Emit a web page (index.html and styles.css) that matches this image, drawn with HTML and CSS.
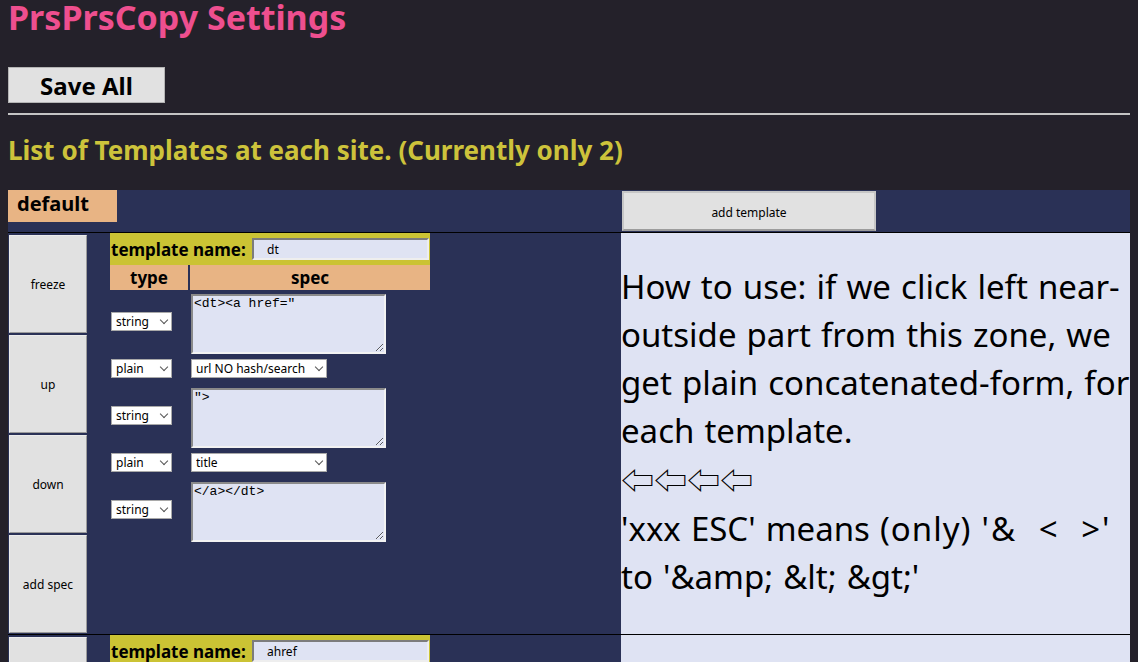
FILE: index.html
```html
<!DOCTYPE html>
<html lang="en">
<head>
<meta charset="utf-8">
<title>PrsPrsCopy Settings</title>
<link rel="stylesheet" href="styles.css">
</head>
<body>
<h1 class="title">PrsPrsCopy Settings</h1>
<button class="save-btn">Save All</button>
<hr class="rule">
<h2 class="subtitle">List of Templates at each site. (Currently only 2)</h2>

<div class="site">
  <div class="site-head">
    <div class="site-left"><div class="site-name">default</div></div>
    <div class="site-right"><button class="add-tpl">add template</button></div>
  </div>

  <div class="tpl-row">
    <div class="tpl-main">
      <div class="tpl-buttons">
        <button class="side-btn">freeze</button>
        <button class="side-btn">up</button>
        <button class="side-btn">down</button>
        <button class="side-btn">add spec</button>
      </div>
      <div class="tpl">
        <div class="tpl-name"><span class="tpl-label">template name:</span><input class="tpl-input" value="dt"></div>
        <div class="spec-head"><div class="spec-h type-h">type</div><div class="spec-h spec-hh">spec</div></div>
        <div class="spec-row text-row">
          <span class="sel sel-type"><select><option>string</option></select></span>
          <textarea class="spec-text">&lt;dt&gt;&lt;a href="</textarea>
        </div>
        <div class="spec-row plain-row">
          <span class="sel sel-type"><select><option>plain</option></select></span>
          <span class="sel sel-val"><select><option>url NO hash/search</option></select></span>
        </div>
        <div class="spec-row text-row">
          <span class="sel sel-type"><select><option>string</option></select></span>
          <textarea class="spec-text">"&gt;</textarea>
        </div>
        <div class="spec-row plain-row">
          <span class="sel sel-type"><select><option>plain</option></select></span>
          <span class="sel sel-val"><select><option>title</option></select></span>
        </div>
        <div class="spec-row text-row">
          <span class="sel sel-type"><select><option>string</option></select></span>
          <textarea class="spec-text">&lt;/a&gt;&lt;/dt&gt;</textarea>
        </div>
      </div>
    </div>
    <div class="help">How to use: if we click left near-outside part from this zone, we get plain concatenated-form, for each template.<br><span class="arrows">⇦⇦⇦⇦</span><br>'xxx ESC' means <span class="only">(only)</span> <span class="syms">'&amp; &lt; &gt;'</span> to '&amp;amp; &amp;lt; &amp;gt;'</div>
  </div>

  <div class="tpl-row">
    <div class="tpl-main">
      <div class="tpl-buttons">
        <button class="side-btn">freeze</button>
        <button class="side-btn">up</button>
        <button class="side-btn">down</button>
        <button class="side-btn">add spec</button>
      </div>
      <div class="tpl">
        <div class="tpl-name"><span class="tpl-label">template name:</span><input class="tpl-input" value="ahref"></div>
        <div class="spec-head"><div class="spec-h type-h">type</div><div class="spec-h spec-hh">spec</div></div>
        <div class="spec-row text-row">
          <span class="sel sel-type"><select><option>string</option></select></span>
          <textarea class="spec-text">&lt;a href="</textarea>
        </div>
        <div class="spec-row plain-row">
          <span class="sel sel-type"><select><option>plain</option></select></span>
          <span class="sel sel-val"><select><option>url NO hash/search</option></select></span>
        </div>
        <div class="spec-row text-row">
          <span class="sel sel-type"><select><option>string</option></select></span>
          <textarea class="spec-text">"&gt;</textarea>
        </div>
        <div class="spec-row plain-row">
          <span class="sel sel-type"><select><option>plain</option></select></span>
          <span class="sel sel-val"><select><option>title</option></select></span>
        </div>
        <div class="spec-row text-row">
          <span class="sel sel-type"><select><option>string</option></select></span>
          <textarea class="spec-text">&lt;/a&gt;</textarea>
        </div>
      </div>
    </div>
    <div class="help">How to use: if we click left near-outside part from this zone, we get plain concatenated-form, for each template.<br><span class="arrows">⇦⇦⇦⇦</span><br>'xxx ESC' means <span class="only">(only)</span> <span class="syms">'&amp; &lt; &gt;'</span> to '&amp;amp; &amp;lt; &amp;gt;'</div>
  </div>
</div>
</body>
</html>
```

FILE: styles.css
```css
* { box-sizing: border-box; }

body {
  margin: 0 8px;
  background: #24212a;
  font-family: "Noto Sans", "DejaVu Sans", sans-serif;
  color: #000;
}

.title {
  margin: 0;
  font-size: 34px;
  line-height: 30px;
  padding-top: 2px;
  font-weight: 700;
  color: #ee4f8f;
}

.save-btn {
  display: block;
  margin-top: 35px;
  width: 157px;
  height: 36px;
  padding: 0;
  background: #e1e1e1;
  border: 1px solid #b4b4b4;
  font-family: "Noto Sans", sans-serif;
  font-size: 24px;
  font-weight: 700;
  color: #000;
}

.rule {
  margin: 10px -8px 0 -2px;
  height: 0;
  border: 0;
  border-top: 2px solid #c4c4c4;
}

.subtitle {
  margin: 21px 0 0;
  font-size: 26px;
  line-height: 28px;
  font-weight: 700;
  color: #cdc33b;
}

.site {
  margin: 26px 0 0 -1px;
  width: 1126px;
  background: #2a3156;
}

.site-head {
  display: grid;
  grid-template-columns: 614px 1fr;
  height: 42px;
}

.site-name {
  width: 110px;
  height: 32px;
  padding: 0 10px;
  background: #e8b484;
  font-size: 20px;
  line-height: 28px;
  font-weight: 700;
}

.add-tpl {
  display: block;
  margin: 1px 0 0 1px;
  width: 254px;
  height: 40px;
  padding: 2px 0 0;
  background: #e1e1e1;
  border: 2px solid #c6c6c6;
  border-bottom-color: #9c9c9c;
  font-family: "Noto Sans", sans-serif;
  font-size: 12px;
  color: #000;
}

.tpl-row {
  display: grid;
  grid-template-columns: 613px 1fr;
  border: 1px solid #000;
  border-bottom: 0;
}

.tpl-main {
  display: flex;
  align-items: flex-start;
}

.tpl-buttons {
  display: flex;
  flex-direction: column;
  gap: 2px;
  padding: 2px 0 1px 1px;
}

.side-btn {
  width: 78px;
  height: 98px;
  padding: 0;
  background: #e1e1e1;
  border: 1px solid;
  border-color: #ececec #9b9b9b #9b9b9b #ececec;
  font-family: "Noto Sans", sans-serif;
  font-size: 12px;
  color: #000;
}

.tpl {
  width: 320px;
  margin-left: 23px;
}

.tpl-name {
  display: flex;
  align-items: center;
  height: 32px;
  padding: 0 1px;
  background: #cbc334;
}

.tpl-label {
  font-size: 17px;
  font-weight: 700;
}

.tpl-input {
  margin-left: auto;
  width: 177px;
  height: 22px;
  padding: 0 0 0 13px;
  background: #dfe3f3;
  border: 2px solid;
  border-color: #7c7c7c #eeeeee #eeeeee #7c7c7c;
  font-family: "Noto Sans", sans-serif;
  font-size: 12px;
  color: #000;
}

.spec-head {
  display: grid;
  grid-template-columns: 78px 1fr;
  gap: 2px;
  height: 25px;
}

.spec-h {
  background: #e8b484;
  text-align: center;
  font-size: 17px;
  line-height: 25px;
  font-weight: 700;
}

.spec-row {
  display: grid;
  grid-template-columns: 81px 1fr;
  align-items: center;
}

.text-row {
  padding: 4px 0;
}

.text-row .sel {
  margin-bottom: 5px;
}

.plain-row {
  height: 26px;
  align-items: start;
  padding-top: 1px;
}

.sel {
  position: relative;
  display: block;
  margin-left: 1px;
}

.sel select {
  display: block;
  appearance: none;
  height: 19px;
  padding: 0 0 0 4px;
  background: #fff;
  border: 1px solid #a9a9a9;
  border-radius: 0;
  font-family: "Noto Sans", sans-serif;
  font-size: 12px;
  line-height: 17px;
  color: #000;
}

.sel::after {
  content: "";
  position: absolute;
  top: 5px;
  width: 5px;
  height: 5px;
  border-right: 1px solid #555;
  border-bottom: 1px solid #555;
  transform: rotate(45deg);
}

.sel-type select { width: 61px; }
.sel-type::after { left: 50px; }

.sel-val { margin-left: 0; }
.sel-val select { width: 136px; }
.sel-val::after { left: 125px; }

.spec-text {
  display: block;
  width: 195px;
  height: 60px;
  margin: 0;
  padding: 0 1px;
  background: #dfe3f3;
  border: 2px solid;
  border-color: #8a8a8a #f2f2f2 #f2f2f2 #8a8a8a;
  font-family: "Liberation Mono", monospace;
  font-size: 13px;
  line-height: 15px;
  color: #000;
}

.help {
  background: #dfe3f3;
  padding-top: 30px;
  font-size: 33px;
  line-height: 48px;
  word-spacing: 1.5px;
  color: #000;
}

.arrows {
  font-family: "Noto Sans CJK JP", "DejaVu Sans", sans-serif;
  font-weight: 300;
}

.only {
  letter-spacing: 1px;
}

.syms {
  word-spacing: 11px;
  letter-spacing: 2px;
}
```
